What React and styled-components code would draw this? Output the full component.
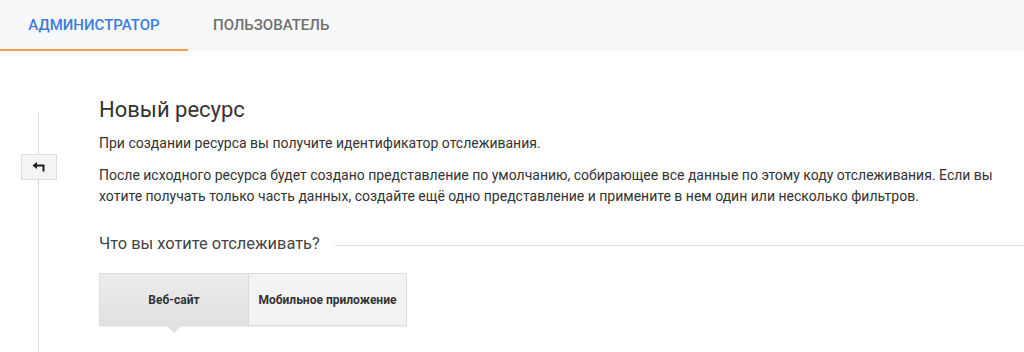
import styled, { createGlobalStyle } from "styled-components";

const GlobalStyle = createGlobalStyle`
  body {
    margin: 0;
    background: #ffffff;
    font-family: Roboto, "Liberation Sans", sans-serif;
  }
`;

const App = () => {
  return (
    <>
      <GlobalStyle />
      <Page>
        <TabBar>
          <Tab active>АДМИНИСТРАТОР</Tab>
          <Tab>ПОЛЬЗОВАТЕЛЬ</Tab>
        </TabBar>
        <Body>
          <Rail>
            <RailLine />
            <BackButton>
              <svg width="15" height="10" viewBox="0 0 15 10">
                <path d="M0.5 3.5 L5 0 L5 2.5 L12.5 2.5 L12.5 9.5 L10.5 9.5 L10.5 4.5 L5 4.5 L5 7 Z" fill="#1e1e1e" />
              </svg>
            </BackButton>
          </Rail>
          <Content>
            <Title>Новый ресурс</Title>
            <Text>При создании ресурса вы получите идентификатор отслеживания.</Text>
            <Text>
              После исходного ресурса будет создано представление по умолчанию, собирающее все данные по этому коду
              отслеживания. Если вы хотите получать только часть данных, создайте ещё одно представление и примените в
              нем один или несколько фильтров.
            </Text>
            <SectionHead>
              <SectionTitle>Что вы хотите отслеживать?</SectionTitle>
              <SectionRule />
            </SectionHead>
            <Toggle>
              <ToggleButton selected width={150}>Веб-сайт</ToggleButton>
              <ToggleButton width={158}>Мобильное приложение</ToggleButton>
            </Toggle>
          </Content>
        </Body>
      </Page>
    </>
  );
};

const Page = styled.div`
  width: 1024px;
  height: 352px;
  overflow: hidden;
`;

const TabBar = styled.div`
  display: flex;
  height: 51px;
  background: #f7f8f9;
`;

const Tab = styled.div`
  display: flex;
  align-items: center;
  justify-content: ${(p) => (p.active ? "center" : "flex-start")};
  padding: 0 0 0 ${(p) => (p.active ? "0" : "25px")};
  width: ${(p) => (p.active ? "188px" : "auto")};
  box-sizing: border-box;
  font-size: 15px;
  font-weight: 500;
  color: ${(p) => (p.active ? "#3b7ddd" : "#707070")};
  border-bottom: 2px solid ${(p) => (p.active ? "#f0a048" : "transparent")};
`;

const Body = styled.div`
  display: flex;
`;

const Rail = styled.div`
  position: relative;
  width: 99px;
  flex-shrink: 0;
`;

const RailLine = styled.div`
  position: absolute;
  left: 38px;
  top: 61px;
  width: 1px;
  height: 260px;
  background: #dcdcdc;
`;

const BackButton = styled.div`
  position: absolute;
  left: 21px;
  top: 103px;
  width: 34px;
  height: 24px;
  display: flex;
  align-items: center;
  justify-content: center;
  background: #f4f4f4;
  border: 1px solid #dedede;
`;

const Content = styled.div`
  flex: 1;
  padding: 45px 14px 0 0;
`;

const Title = styled.div`
  font-size: 22px;
  line-height: 28px;
  color: #333;
  margin-bottom: 9px;
`;

const Text = styled.p`
  margin: 0 0 11px;
  font-size: 14px;
  line-height: 21px;
  color: #333;
`;

const SectionHead = styled.div`
  display: flex;
  align-items: center;
  gap: 15px;
  margin: 25px -14px 0 0;
`;

const SectionTitle = styled.div`
  font-size: 16.4px;
  line-height: 24px;
  color: #444;
`;

const SectionRule = styled.div`
  flex: 1;
  height: 1px;
  background: #e0e0e0;
  margin-top: 2px;
`;

const Toggle = styled.div`
  display: flex;
  margin-top: 17px;
`;

const ToggleButton = styled.div`
  position: relative;
  width: ${(p) => p.width}px;
  height: 53px;
  box-sizing: border-box;
  display: flex;
  align-items: center;
  justify-content: center;
  font-size: 12px;
  font-weight: 700;
  color: #333;
  background: ${(p) => (p.selected ? "linear-gradient(#ececec, #e1e1e1)" : "#f3f3f3")};
  border: 1px solid #dddddd;
  box-shadow: 0 1px 1px rgba(0, 0, 0, 0.06);
  & + & {
    border-left: none;
  }
  &::after {
    content: "";
    display: ${(p) => (p.selected ? "block" : "none")};
    position: absolute;
    left: 50%;
    bottom: -8px;
    margin-left: -8px;
    border-left: 8px solid transparent;
    border-right: 8px solid transparent;
    border-top: 8px solid #e1e1e1;
  }
`;

export default App;
